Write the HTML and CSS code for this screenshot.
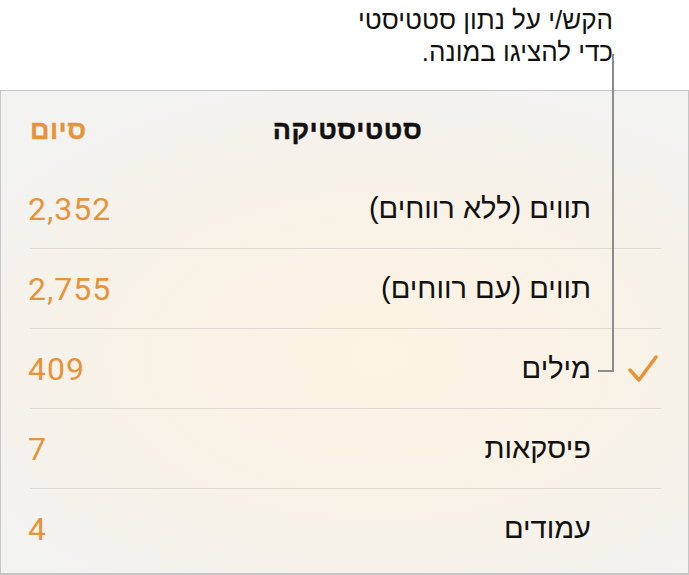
FILE: index.html
```html
<!DOCTYPE html>
<html lang="he" dir="rtl">
<head>
<meta charset="utf-8">
<link rel="stylesheet" href="styles.css">
</head>
<body>
<div class="page">
  <div class="callout">
    <p class="callout-text">הקש/י על נתון סטטיסטי<br>כדי להציגו במונה.</p>
  </div>
  <div class="panel">
    <div class="header">
      <div class="spacer"></div>
      <div class="title">סטטיסטיקה</div>
      <div class="done">סיום</div>
    </div>
    <div class="row">
      <div class="check"></div>
      <div class="label">תווים (ללא רווחים)</div>
      <div class="value">2,352</div>
    </div>
    <div class="row">
      <div class="check"></div>
      <div class="label">תווים (עם רווחים)</div>
      <div class="value">2,755</div>
    </div>
    <div class="row">
      <div class="check">
        <svg width="30" height="28" viewBox="0 0 30 28"><polyline points="2,15 11,25 28,2" fill="none" stroke="#e6943a" stroke-width="3.5" stroke-linecap="round" stroke-linejoin="round"/></svg>
      </div>
      <div class="label">מילים</div>
      <div class="value">409</div>
    </div>
    <div class="row">
      <div class="check"></div>
      <div class="label">פיסקאות</div>
      <div class="value">7</div>
    </div>
    <div class="row last">
      <div class="check"></div>
      <div class="label">עמודים</div>
      <div class="value">4</div>
    </div>
  </div>
  <div class="leader"></div>
</div>
</body>
</html>
```

FILE: styles.css
```css
html, body {
  margin: 0;
  padding: 0;
  background: #ffffff;
}
body {
  font-family: "Liberation Sans", "DejaVu Sans", sans-serif;
  color: #111111;
}
.page {
  position: relative;
  width: 689px;
  height: 575px;
  overflow: hidden;
}
.callout {
  height: 90px;
  padding-right: 76px;
  box-sizing: border-box;
}
.callout-text {
  margin: 0;
  padding-top: 4px;
  font-size: 26px;
  line-height: 32px;
  text-align: right;
  color: #111;
}
.panel {
  height: 485px;
  box-sizing: border-box;
  border: 1px solid #c6c6c6;
  border-bottom-width: 2px;
  background: radial-gradient(ellipse 70% 60% at 55% 55%, #fcf4e4 0%, #f9f2e6 45%, #f5f2ec 80%, #f3f3f2 100%);
}
.header {
  display: grid;
  grid-template-columns: 1fr auto 1fr;
  align-items: center;
  height: 78px;
  padding: 0 29px;
}
.title {
  font-weight: bold;
  font-size: 27px;
  letter-spacing: 0.5px;
  -webkit-text-stroke: 0.4px #111;
  padding-left: 6px;
}
.done {
  font-weight: bold;
  font-size: 27px;
  letter-spacing: 0.5px;
  -webkit-text-stroke: 0.3px #e6943a;
  color: #e6943a;
  text-align: left;
}
.row {
  display: flex;
  align-items: center;
  height: 79px;
  margin: 0 27px 0 29px;
  border-bottom: 1px solid #dfdbd3;
}
.row.last {
  border-bottom: none;
}
.check {
  width: 70px;
  display: flex;
  justify-content: flex-start;
  padding-right: 3px;
  box-sizing: border-box;
}
.check svg {
  display: block;
}
.label {
  flex: 1;
  font-size: 29px;
}
.value {
  font-family: Roboto, "Liberation Sans", sans-serif;
  font-size: 32px;
  letter-spacing: 1px;
  margin-left: -2px;
  color: #e6943a;
  direction: ltr;
}
.leader {
  position: absolute;
  left: 598px;
  top: 54px;
  width: 14px;
  height: 316px;
  border-right: 2px solid #8c8c8c;
  border-bottom: 2px solid #8c8c8c;
}
```
